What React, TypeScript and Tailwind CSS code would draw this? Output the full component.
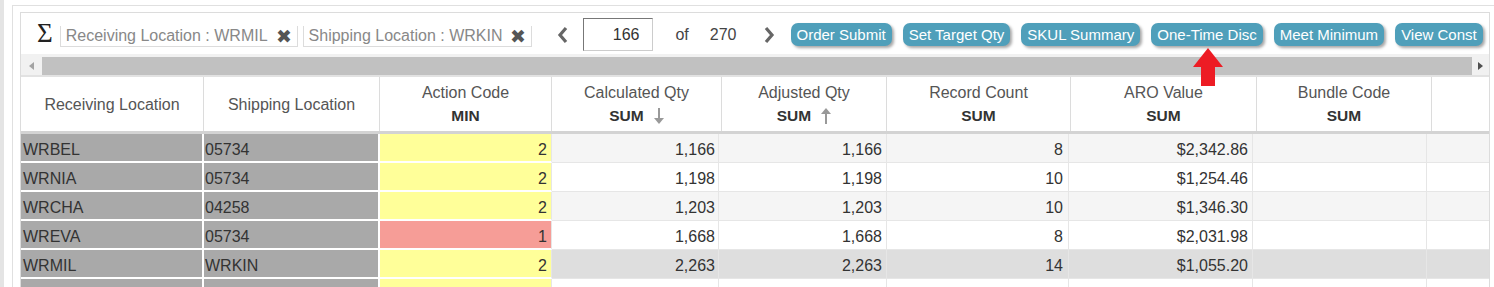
import React from 'react';

const HEAD_COLS = [
  { w: 183, title: 'Receiving Location' },
  { w: 176, title: 'Shipping Location' },
  { w: 172, title: 'Action Code', agg: 'MIN' },
  { w: 170, title: 'Calculated Qty', agg: 'SUM', sort: 'down' },
  { w: 165, title: 'Adjusted Qty', agg: 'SUM', sort: 'up' },
  { w: 184, title: 'Record Count', agg: 'SUM' },
  { w: 186, title: 'ARO Value', agg: 'SUM' },
  { w: 175, title: 'Bundle Code', agg: 'SUM' },
];

const BODY_W = [183, 176, 172, 167, 168, 182, 184, 174];

const ROWS = [
  { rec: 'WRBEL', ship: '05734', code: 2, calc: '1,166', adj: '1,166', count: 8, aro: '$2,342.86', bg: 'bg-[#f5f5f5]' },
  { rec: 'WRNIA', ship: '05734', code: 2, calc: '1,198', adj: '1,198', count: 10, aro: '$1,254.46', bg: 'bg-white' },
  { rec: 'WRCHA', ship: '04258', code: 2, calc: '1,203', adj: '1,203', count: 10, aro: '$1,346.30', bg: 'bg-[#f5f5f5]' },
  { rec: 'WREVA', ship: '05734', code: 1, calc: '1,668', adj: '1,668', count: 8, aro: '$2,031.98', bg: 'bg-white' },
  { rec: 'WRMIL', ship: 'WRKIN', code: 2, calc: '2,263', adj: '2,263', count: 14, aro: '$1,055.20', bg: 'bg-[#dedede]' },
  { rec: '', ship: '', code: null, calc: '', adj: '', count: null, aro: '', bg: 'bg-white' },
];

const ACTIONS = ['Order Submit', 'Set Target Qty', 'SKUL Summary', 'One-Time Disc', 'Meet Minimum', 'View Const'];

const Chevron = ({ dir }: { dir: 'left' | 'right' }) => (
  <svg width="12" height="18" viewBox="0 0 12 18">
    <polyline
      points={dir === 'left' ? '9,2 3,9 9,16' : '3,2 9,9 3,16'}
      fill="none"
      stroke="#666"
      strokeWidth="3.2"
      strokeLinejoin="miter"
    />
  </svg>
);

const SortArrow = ({ dir }: { dir: 'up' | 'down' }) => (
  <svg width="10" height="18" viewBox="0 0 10 18" className="ml-[10px]">
    {dir === 'down' ? (
      <>
        <rect x="4" y="1" width="2" height="11" fill="#999" />
        <polygon points="0,11 10,11 5,17" fill="#999" />
      </>
    ) : (
      <>
        <polygon points="5,1 10,7 0,7" fill="#999" />
        <rect x="4" y="6" width="2" height="11" fill="#999" />
      </>
    )}
  </svg>
);

const FilterChip = ({ label }: { label: string }) => (
  <div className="flex items-center h-[21px] mt-[4px] border-l border-r border-b border-[#dcdcdc] pl-[5px] pr-[5px] text-[16px] text-[#888]">
    <span>{label}</span>
    <span className="ml-[8px] text-[#555] text-[19px] leading-none">✖</span>
  </div>
);

export default function App() {
  return (
    <div className="relative w-[1494px] h-[287px] overflow-hidden bg-white font-['Liberation_Sans',Arial,sans-serif]">
      <div className="flex h-full">
        <div className="w-[4px] h-full bg-[#e4e4e4]" />
        <div className="flex-1 pl-[8px] pt-[5px]">
          <div className="h-full border-l border-t border-[#e0e0e0] pl-[7px] pt-[6px]">
            <div className="w-[1470px] h-full border-l border-t border-r border-[#dcdcdc]">
              {/* toolbar */}
              <div className="flex items-center h-[41px] pl-[16px] pt-[2px]">
                <span className="font-['Liberation_Serif',serif] text-[27px] leading-none text-[#222] mb-[3px]">Σ</span>
                <div className="ml-[7px]">
                  <FilterChip label="Receiving Location : WRMIL" />
                </div>
                <div className="ml-[5px]">
                  <FilterChip label="Shipping Location : WRKIN" />
                </div>
                <div className="ml-[25px] flex items-center">
                  <Chevron dir="left" />
                </div>
                <div className="ml-[14px] w-[70px] h-[33px] border border-[#777] border-r-[#ccc] border-b-[#ccc] text-right pr-[13px] text-[16px] leading-[31px] text-[#333]">
                  166
                </div>
                <span className="ml-[22px] text-[16px] text-[#444]">of</span>
                <span className="ml-[21px] text-[16px] text-[#444]">270</span>
                <div className="ml-[26px] flex items-center">
                  <Chevron dir="right" />
                </div>
                <div className="ml-[16px] flex items-center gap-[11px]">
                  {ACTIONS.map((a) => (
                    <button
                      key={a}
                      className="h-[23px] px-[6px] rounded-[7px] bg-[#4f9fba] text-white text-[15px] leading-[23px] shadow-[2px_2px_3px_rgba(0,0,0,0.35)] whitespace-nowrap"
                    >
                      {a}
                    </button>
                  ))}
                </div>
              </div>

              {/* horizontal scrollbar */}
              <div className="flex h-[21px] bg-[#f1f1f1]">
                <div className="w-[21px] flex items-center justify-center pt-[3px]">
                  <svg width="5" height="8" viewBox="0 0 5 8">
                    <polygon points="5,0 5,8 0,4" fill="#a3a3a3" />
                  </svg>
                </div>
                <div className="flex-1 pt-[3px]">
                  <div className="h-full bg-[#c1c1c1]" />
                </div>
                <div className="w-[17px] flex items-center justify-center pt-[3px]">
                  <svg width="5" height="8" viewBox="0 0 5 8">
                    <polygon points="0,0 5,4 0,8" fill="#505050" />
                  </svg>
                </div>
              </div>

              {/* table header */}
              <div className="flex h-[59px] border-t-[2px] border-[#e2e2e2] border-b-[3px] border-b-[#d3d3d3] bg-white">
                {HEAD_COLS.map((c) => (
                  <div
                    key={c.title}
                    style={{ width: c.w }}
                    className="shrink-0 flex flex-col items-center justify-center border-r border-[#dcdcdc]"
                  >
                    <div className="text-[16px] leading-[23px] text-[#555]">{c.title}</div>
                    {c.agg && (
                      <div className="flex items-center text-[15.5px] leading-[23px] font-bold text-[#333]">
                        {c.agg}
                        {c.sort && <SortArrow dir={c.sort as 'up' | 'down'} />}
                      </div>
                    )}
                  </div>
                ))}
                <div className="flex-1" />
              </div>

              {/* table body */}
              {ROWS.map((r, i) => (
                <div key={i} className={`flex h-[29px] text-[16px] text-[#333] ${r.bg}`}>
                  <div style={{ width: BODY_W[0] }} className="shrink-0 bg-[#a9a9a9] border-r-2 border-b-2 border-white pl-[2px] pt-[2px] leading-[27px]">
                    {r.rec}
                  </div>
                  <div style={{ width: BODY_W[1] }} className="shrink-0 bg-[#a9a9a9] border-r-2 border-b-2 border-white pl-[1px] pt-[2px] leading-[27px]">
                    {r.ship}
                  </div>
                  <div
                    style={{ width: BODY_W[2] }}
                    className={`shrink-0 border-b-2 border-r border-white border-r-[#e6e6e6] text-right pr-[4px] pt-[2px] leading-[27px] ${r.code === 1 ? 'bg-[#f69d97]' : 'bg-[#ffff99]'}`}
                  >
                    {r.code}
                  </div>
                  <div style={{ width: BODY_W[3] }} className="shrink-0 border-r border-b border-[#e6e6e6] text-right pr-[3px] pt-[2px] leading-[27px]">
                    {r.calc}
                  </div>
                  <div style={{ width: BODY_W[4] }} className="shrink-0 border-r border-b border-[#e6e6e6] text-right pr-[4px] pt-[2px] leading-[27px]">
                    {r.adj}
                  </div>
                  <div style={{ width: BODY_W[5] }} className="shrink-0 border-r border-b border-[#e6e6e6] text-right pr-[5px] pt-[2px] leading-[27px]">
                    {r.count}
                  </div>
                  <div style={{ width: BODY_W[6] }} className="shrink-0 border-r border-b border-[#e6e6e6] text-right pr-[4px] pt-[2px] leading-[27px]">
                    {r.aro}
                  </div>
                  <div style={{ width: BODY_W[7] }} className="shrink-0 border-r border-b border-[#e6e6e6]" />
                  <div className="flex-1 border-b border-[#e6e6e6]" />
                </div>
              ))}
            </div>
          </div>
        </div>
      </div>

      {/* red pointer arrow */}
      <svg className="absolute left-[1193px] top-[48px]" width="30" height="38" viewBox="0 0 30 38">
        <polygon points="15,0 30,19 0,19" fill="#ed1c24" />
        <rect x="8" y="18" width="14" height="20" fill="#ed1c24" />
      </svg>
    </div>
  );
}
